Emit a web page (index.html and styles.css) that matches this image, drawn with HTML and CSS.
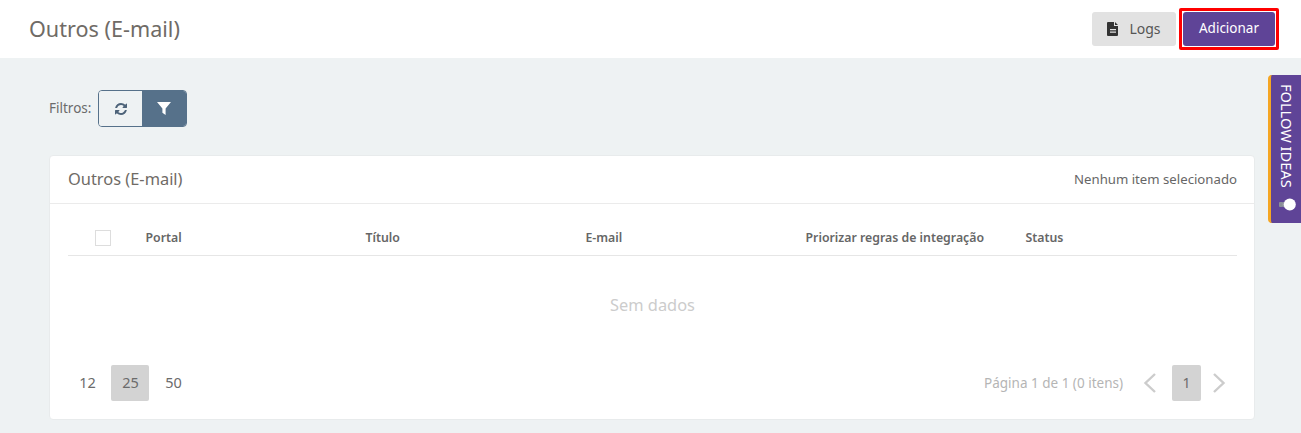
FILE: index.html
```html
<!DOCTYPE html>
<html lang="pt-BR">
<head>
<meta charset="utf-8">
<title>Outros (E-mail)</title>
<link rel="stylesheet" href="styles.css">
</head>
<body>
<header class="topbar">
  <h1 class="page-title">Outros (E-mail)</h1>
  <div class="top-actions">
    <button class="btn btn-logs">
      <svg class="file-icon" viewBox="0 0 12 14" width="12" height="14"><path fill="#333" fill-rule="evenodd" d="M1 0h6v4h4v9a1 1 0 0 1-1 1H1a1 1 0 0 1-1-1V1a1 1 0 0 1 1-1zM8 0l3 3H8zM3 7v1.200h6V7zM3 9.600v1.200h6V9.600z"/></svg>
      <span>Logs</span>
    </button>
    <div class="highlight"><button class="btn btn-add">Adicionar</button></div>
  </div>
</header>
<main class="content">
  <div class="filters">
    <span class="filters-label">Filtros:</span>
    <div class="filter-group">
      <button class="filter-btn refresh" aria-label="Atualizar">
        <svg viewBox="0 0 1536 1536" width="12" height="12"><path fill="#4d6379" d="M1511 928q0 5-1 7-64 268-268 434.500T764 1536q-146 0-282.500-55T238 1324l-129 129q-19 19-45 19t-45-19-19-45V960q0-26 19-45t45-19h448q26 0 45 19t19 45-19 45L420 1142q71 66 161 102t187 36q134 0 250-65t186-179q11-17 53-117 8-23 30-23h192q13 0 22.500 9.500t9.500 22.500zM1536 128v448q0 26-19 45t-45 19h-448q-26 0-45-19t-19-45 19-45l138-138q-148-137-349-137-134 0-250 65T332 500q-11 17-53 117-8 23-30 23H50q-13 0-22.500-9.500T18 608v-7q65-268 270-434.500T768 0q146 0 284 55.500T1297 212l130-129q19-19 45-19t45 19 19 45z"/></svg>
      </button>
      <button class="filter-btn funnel" aria-label="Filtrar">
        <svg viewBox="0 0 14 13" width="14" height="13"><path fill="#fff" d="M0 0h14L8.600 6.500V13L5.400 10.800V6.500z"/></svg>
      </button>
    </div>
  </div>
  <section class="card">
    <div class="card-head">
      <h2 class="card-title">Outros (E-mail)</h2>
      <span class="selection">Nenhum item selecionado</span>
    </div>
    <div class="card-body">
      <div class="table-head">
        <div class="col col-check"><span class="checkbox"></span></div>
        <div class="col col-portal">Portal</div>
        <div class="col col-title">Título</div>
        <div class="col col-email">E-mail</div>
        <div class="col col-rules">Priorizar regras de integração</div>
        <div class="col col-status">Status</div>
      </div>
      <div class="empty">Sem dados</div>
      <div class="pager">
        <div class="sizes">
          <span class="size">12</span>
          <span class="size active">25</span>
          <span class="size">50</span>
        </div>
        <div class="pages">
          <span class="page-info">Página 1 de 1 (0 itens)</span>
          <svg class="chev chev-prev" viewBox="0 0 14 22" width="14" height="22"><path fill="none" stroke="#ccc" stroke-width="2.400" d="M12 2 2.500 11l9.500 9"/></svg>
          <span class="page-num">1</span>
          <svg class="chev chev-next" viewBox="0 0 14 22" width="14" height="22"><path fill="none" stroke="#ccc" stroke-width="2.400" d="m2 2 9.500 9L2 20"/></svg>
        </div>
      </div>
    </div>
  </section>
</main>
<aside class="follow">
  <span class="follow-text">FOLLOW IDEAS</span>
  <svg class="bulb" viewBox="0 0 17 13" width="17" height="13"><rect x="0" y="4" width="4" height="5" rx="1" fill="#8a8f98"/><path fill="#9a9da6" d="M3.500 4.500 7 3v7L3.500 8.500z"/><circle cx="10.800" cy="6.500" r="6" fill="#fff"/></svg>
</aside>
</body>
</html>
```
FILE: styles.css
```css
* { box-sizing: border-box; }
html, body { height: 100%; }
body {
  margin: 0;
  background: #eef2f3;
  color: #6b6b6b;
  font-family: "Noto Sans", "Open Sans", sans-serif;
  overflow: hidden;
}
button { font-family: inherit; cursor: pointer; }

.topbar {
  height: 58px;
  background: #fff;
  display: flex;
  align-items: center;
  justify-content: space-between;
  padding: 0 22px 0 29px;
}
.page-title {
  margin: 0;
  padding-bottom: 2px;
  font-size: 21.600px;
  font-weight: 400;
  color: #6f6b66;
}
.top-actions { display: flex; align-items: center; gap: 3px; }
.btn {
  height: 34px;
  border: 0;
  border-radius: 3px;
  font-size: 14px;
  display: flex;
  align-items: center;
  justify-content: center;
  padding: 0 0 2px;
}
.btn-logs {
  width: 84px;
  gap: 10px;
  background: #e2e2e2;
  color: #555;
}
.file-icon { margin-top: 2px; }
.highlight {
  border: 3px solid #f00;
  border-radius: 2px;
  padding: 1px;
}
.btn-add {
  width: 92px;
  background: #5f4497;
  color: #fff;
  font-size: 13.500px;
}

.content { padding: 32px 46px 0 49px; }
.filters { display: flex; align-items: center; gap: 7px; height: 37px; }
.filters-label { font-size: 13.500px; color: #6b6b6b; padding-bottom: 1px; }
.filter-group {
  display: flex;
  width: 89px;
  height: 37px;
  border: 1px solid #56718a;
  border-radius: 4px;
  overflow: hidden;
}
.filter-btn {
  border: 0;
  padding: 0;
  display: flex;
  align-items: center;
  justify-content: center;
}
.refresh { width: 43px; background: #eef2f3; }
.funnel { flex: 1; background: #56718a; }

.card {
  margin-top: 28px;
  height: 265px;
  background: #fff;
  border: 1px solid #e8ebec;
  border-radius: 4px;
}
.card-head {
  height: 48px;
  display: flex;
  align-items: center;
  justify-content: space-between;
  padding: 0 17px 2px 18px;
  border-bottom: 1px solid #ebebeb;
}
.card-title { margin: 0; font-size: 16.400px; font-weight: 400; color: #6f6b66; }
.selection { font-size: 13.200px; color: #666; }

.card-body { padding: 0 17px 0 18px; }
.table-head {
  display: grid;
  grid-template-columns: 77.500px 220px 220px 220px 220px 1fr;
  align-items: center;
  height: 52px;
  padding-top: 16px;
  border-bottom: 1px solid #e6e6e6;
  font-size: 12.300px;
  font-weight: 600;
  color: #666;
}
.col-check { padding-left: 27px; }
.checkbox {
  display: block;
  width: 16px;
  height: 16px;
  border: 1px solid #ddd;
}
.empty {
  height: 100px;
  padding-top: 37px;
  text-align: center;
  font-size: 16.400px;
  color: #ccc;
}
.pager {
  display: flex;
  align-items: center;
  justify-content: space-between;
  height: 36px;
  margin-top: 9px;
}
.sizes { display: flex; gap: 5px; font-size: 14.500px; }
.size {
  width: 38px;
  height: 36px;
  display: flex;
  align-items: center;
  justify-content: center;
  padding: 0 0 2px 1px;
  border-radius: 2px;
  color: #6b6b6b;
}
.size.active { background: #d3d3d3; }
.pages { display: flex; align-items: center; padding-right: 11px; }
.page-info { font-size: 13.500px; color: #b5b5b5; margin-right: 20px; padding-bottom: 1px; }
.chev-prev { margin-right: 15px; }
.chev-next { margin-left: 11px; }
.page-num {
  width: 29px;
  height: 36px;
  display: flex;
  align-items: center;
  justify-content: center;
  padding-bottom: 2px;
  background: #d3d3d3;
  border-radius: 2px;
  font-size: 14px;
  color: #6b6b6b;
}

.follow {
  position: absolute;
  top: 75px;
  right: 0;
  width: 33px;
  height: 148px;
  display: flex;
  flex-direction: column;
  align-items: center;
  justify-content: space-between;
  padding: 9px 0 12px 2px;
  background: #5f4497;
  border-left: 3px solid #f5a623;
  border-radius: 4px 0 0 4px;
}
.follow-text {
  writing-mode: vertical-rl;
  font-size: 14.600px;
  color: #fff;
  white-space: nowrap;
}
```
